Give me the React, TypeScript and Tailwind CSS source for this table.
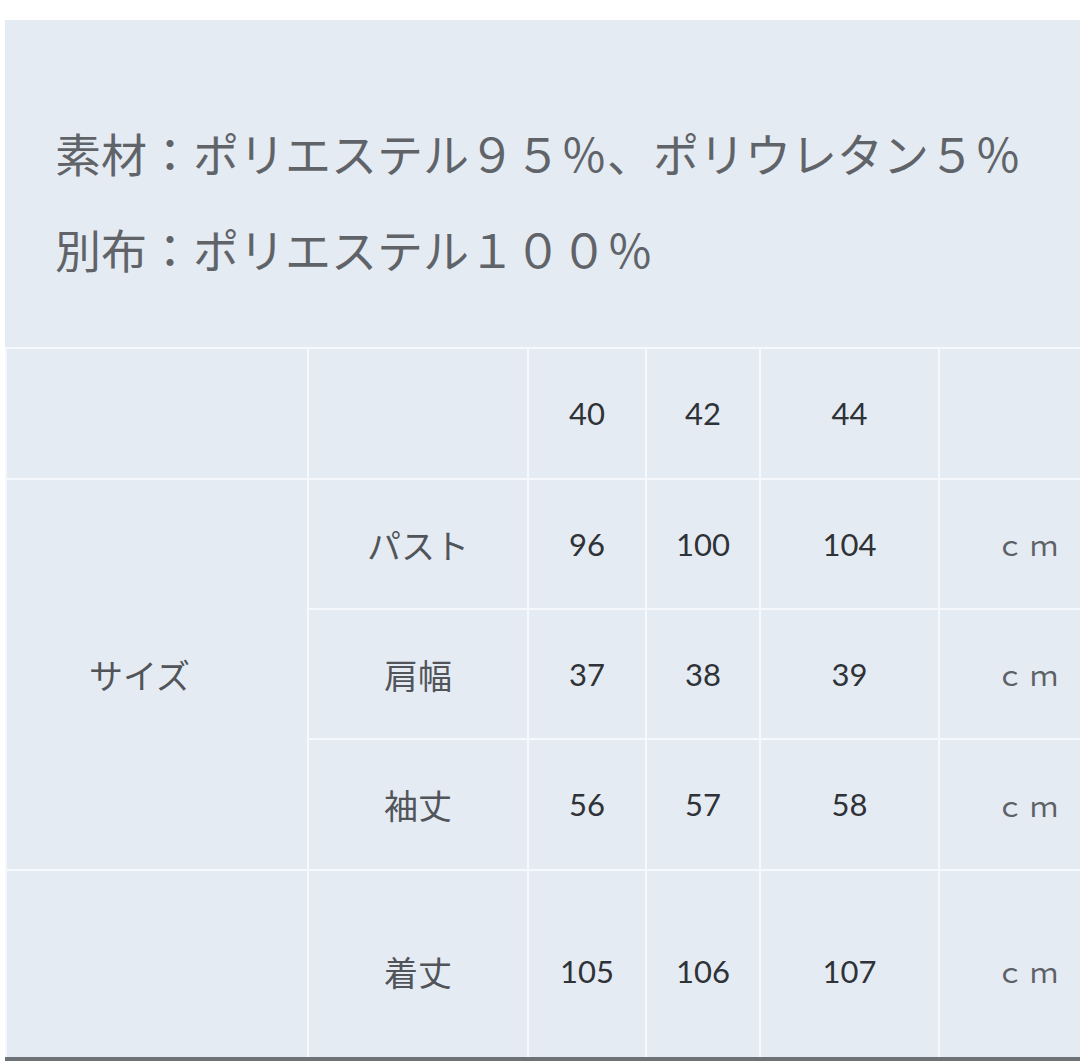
const jp = "font-['Noto_Sans_CJK_JP','Noto_Sans',sans-serif]";
const num = "font-['Lato','Open_Sans',sans-serif]";

const rows = [
  { label: "パスト", values: ["96", "100", "104"] },
  { label: "肩幅", values: ["37", "38", "39"] },
  { label: "袖丈", values: ["56", "57", "58"] },
];

function Cell({
  children,
  className = "",
}: {
  children?: React.ReactNode;
  className?: string;
}) {
  return (
    <div
      className={`flex items-center justify-center border-t-2 border-l-2 border-[#f5f8fc] ${className}`}
    >
      {children}
    </div>
  );
}

function NumCell({ v, className = "" }: { v: string; className?: string }) {
  return (
    <Cell className={className}>
      <span className={`${num} text-[31px] text-[#2f3236]`}>{v}</span>
    </Cell>
  );
}

function Label({ text }: { text: string }) {
  return <span className={`${jp} text-[34px] text-[#515559]`}>{text}</span>;
}

function Unit({ className = "" }: { className?: string }) {
  return (
    <Cell className={`justify-end pr-[16px] ${className}`}>
      <span className={`${jp} text-[28px] tracking-[6px] text-[#5d6166]`}>ｃｍ</span>
    </Cell>
  );
}

export default function App() {
  return (
    <div className="w-[1080px] h-[1061px] bg-white pt-[20px] pl-[5px] overflow-hidden">
      <div className="flex h-[1041px] flex-col bg-[#e5ebf3]">
        {/* material text */}
        <div className={`${jp} flex h-[327px] flex-col pl-[50px] pt-[84px] text-[46px] leading-[96px] text-[#606469]`}>
          <div className="h-[96px] flex items-center">
            素材：ポリエステル９５％、ポリウレタン５％
          </div>
          <div className="h-[96px] flex items-center">別布：ポリエステル１００％</div>
        </div>

        {/* size table */}
        <div className="grid flex-1 grid-cols-[302px_220px_118px_114px_179px_1fr] grid-rows-[131px_130px_130px_131px_1fr]">
          <Cell className="border-l-0" />
          <Cell />
          <NumCell v="40" />
          <NumCell v="42" />
          <NumCell v="44" />
          <Cell />

          <Cell className="row-span-3 border-l-0 justify-start pl-[82px]">
            <Label text="サイズ" />
          </Cell>
          {rows.map((r) => (
            <div key={r.label} className="contents">
              <Cell>
                <Label text={r.label} />
              </Cell>
              {r.values.map((v) => (
                <NumCell key={v} v={v} />
              ))}
              <Unit />
            </div>
          ))}

          <Cell className="border-l-0" />
          <Cell className="pt-[14px]">
            <Label text="着丈" />
          </Cell>
          {["105", "106", "107"].map((v) => (
            <NumCell key={v} v={v} className="pt-[14px]" />
          ))}
          <Unit className="pt-[14px]" />
        </div>
        <div className="h-[4px] bg-[#6d7277]" />
      </div>
    </div>
  );
}
